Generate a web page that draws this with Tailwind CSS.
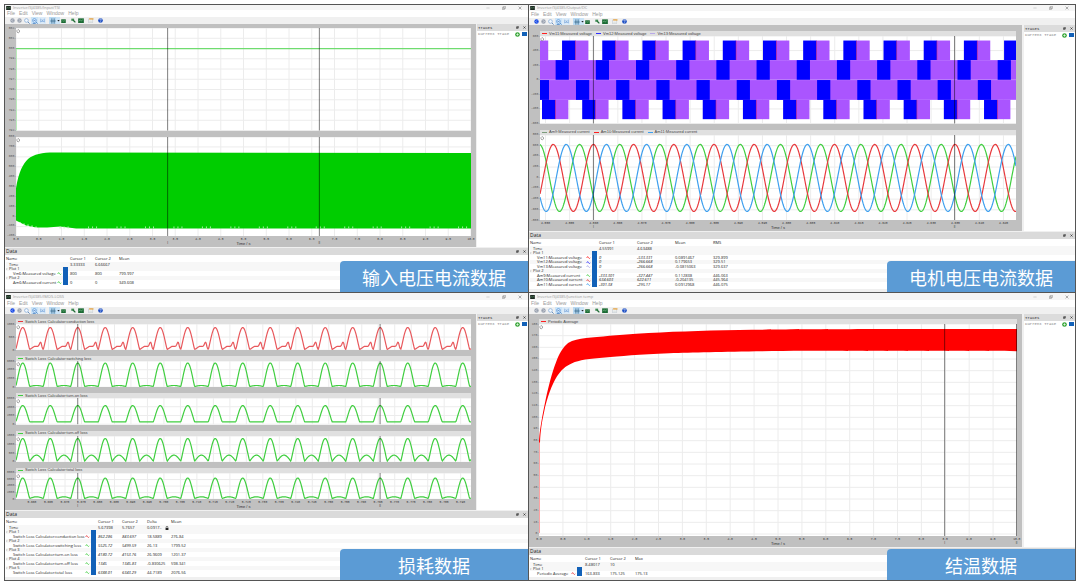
<!DOCTYPE html>
<html lang="zh-CN">
<head>
  <meta charset="UTF-8">
  <meta name="viewport" content="width=device-width, initial-scale=1.0">
  <title>Inverter scopes</title>
  <script src="https://cdn.jsdelivr.net/npm/@tailwindcss/browser@4"></script>
</head>
<body class="bg-white font-['Open_Sans','Noto_Sans_CJK_SC',sans-serif] text-[4px] leading-none">
  <!-- shared icons -->
  <svg class="hidden">
    <symbol id="i-app" viewBox="0 0 14 12"><rect width="14" height="12" fill="#1d2b22"/><path d="M2 8l3-4 3 3 4-4" fill="none" stroke="#6fae7d" stroke-width="1.5"/></symbol>
    <symbol id="i-back" viewBox="0 0 16 16"><circle cx="8" cy="8" r="7" fill="currentColor"/><path d="M9.500 4.500L6 8l3.500 3.500" fill="none" stroke="#fff" stroke-width="2"/></symbol>
    <symbol id="i-fwd" viewBox="0 0 16 16"><circle cx="8" cy="8" r="7" fill="currentColor"/><path d="M6.500 4.500L10 8l-3.500 3.500" fill="none" stroke="#fff" stroke-width="2"/></symbol>
    <symbol id="i-zoom" viewBox="0 0 16 16"><circle cx="6.500" cy="6.500" r="5" fill="#f2f8ff" stroke="#7fa9d6" stroke-width="1.800"/><path d="M10.500 10.500l4.500 4.500" stroke="#5b86b8" stroke-width="2.400"/></symbol>
    <symbol id="i-zoomx" viewBox="0 0 16 16"><circle cx="6.500" cy="6.500" r="5" fill="#e3f1ff" stroke="#4f8fd6" stroke-width="1.800"/><path d="M4 6.500h5M10.500 10.500L15 15M2 14.500h8" stroke="#3f79bd" stroke-width="2"/></symbol>
    <symbol id="i-fit" viewBox="0 0 16 16"><path d="M2 2v12M14 2v12M2 11h12M5 5l6 5M11 5l-6 5" fill="none" stroke="#6f9fd8" stroke-width="1.800"/></symbol>
    <symbol id="i-cursor" viewBox="0 0 16 16"><path d="M5 1v14M11 1v14M1 8h14" fill="none" stroke="#2e6083" stroke-width="2"/></symbol>
    <symbol id="i-scope" viewBox="0 0 16 14"><rect width="16" height="13" y="1" fill="#1c6b35"/><path d="M2 9l4-4 3 4 4-5" fill="none" stroke="#8fd19b" stroke-width="1.500"/></symbol>
    <symbol id="i-pick" viewBox="0 0 16 16"><rect x="1" y="2" width="9" height="7" fill="#3d8a52"/><path d="M7 7l7 7" stroke="#1e6a33" stroke-width="4"/></symbol>
    <symbol id="i-win" viewBox="0 0 18 16"><path d="M1 3h13v12H1z" fill="#fff" stroke="#8b98a8"/><path d="M3 1h14v4H3z" fill="#e8a23a"/><path d="M3 9h9M3 12h9" stroke="#9aa"/></symbol>
    <symbol id="i-help" viewBox="0 0 16 16"><circle cx="8" cy="8" r="7.500" fill="#1d4fc4"/><path d="M5.500 6a2.500 2.500 0 1 1 3.500 2.300c-.8.4-1 .8-1 1.700M8 11.500v2" fill="none" stroke="#fff" stroke-width="1.800"/></symbol>
    <symbol id="i-float" viewBox="0 0 10 10"><path d="M3 1h6v5H3zM1 4h5v5H1z" fill="none" stroke="currentColor" stroke-width="1.600"/></symbol>
    <symbol id="i-close" viewBox="0 0 10 10"><path d="M1.500 1.500l7 7M8.500 1.500l-7 7" stroke="currentColor" stroke-width="2"/></symbol>
    <symbol id="i-min" viewBox="0 0 10 10"><path d="M1 5h8" stroke="currentColor" stroke-width="1"/></symbol>
    <symbol id="i-add" viewBox="0 0 16 16"><circle cx="8" cy="8" r="7.500" fill="#35a535"/><path d="M8 4v8M4 8h8" stroke="#fff" stroke-width="2"/></symbol>
    <symbol id="i-wave" viewBox="0 0 16 12"><path d="M1 8C3 1 6 1 8 6s5 5 7 1" fill="none" stroke="currentColor" stroke-width="3"/></symbol>
    <symbol id="i-lock" viewBox="0 0 12 14"><path d="M3 7V4a3 3 0 0 1 6 0v3" fill="none" stroke="#222" stroke-width="2"/><rect x="1" y="7" width="10" height="7" fill="#222"/></symbol>
    <symbol id="i-down" viewBox="0 0 10 10"><path d="M1 3h8L5 8z" fill="currentColor"/></symbol>
    <symbol id="i-chev" viewBox="0 0 10 10"><path d="M1 3l4 4 4-4" fill="none" stroke="#444" stroke-width="1.500"/></symbol>
  </svg>

  <main id="board" class="grid h-screen grid-cols-[524fr_548fr] grid-rows-[288fr_289fr] p-1"></main>

  <script>
    const GREEN = '#3fce3f', RED = '#e8383c', BLUE = '#3d9fee';
    const icon = (id, cls) => `<svg class="${cls}"><use href="#i-${id}"/></svg>`;
    const range = (from, step, count, digits = 0) =>
      Array.from({ length: count }, (_, i) => (from + i * step).toFixed(digits));

    // sample a function into an svg path
    function curve(w, fn, step = 0.5) {
      let d = '';
      for (let x = 0; x <= w; x += step) d += `${d ? 'L' : 'M'}${x.toFixed(1)} ${fn(x).toFixed(2)}`;
      return d;
    }
    const line = (d, color) => `<path d="${d}" fill="none" stroke="${color}" stroke-width="1.200" vector-effect="non-scaling-stroke"/>`;

    // ---- input voltage / current ----
    const voltage = line('M0 20.500H454', '#6fdc6f') + line('M0.300 102V21', '#b4eab4');
    let notches = '';
    for (let x = 44; x < 450; x += 28.4) {
      notches += [0, 4, 8].map(o => `M${x + o} 89v2`).join('');
    }
    const current = `
      <path d="M0 51C3 34 7 27 12 22C18 17 26 15.500 38 15.500L454 16V91H60L44 89L31 90L20 90L10 88L4 85L0 83Z" fill="#00cd00"/>
      <path d="M4 84.500v3M8 86v3M12 87v3M16 88v3M20 89v2" stroke="#fff" stroke-width="0.800"/>
      <path d="${notches}" stroke="#b5f0b5" stroke-width="0.900"/>`;

    // ---- motor voltage: four levels, each repeating every 40.1 ----
    const levels = [
      { y: 4.5, h: 19.5, blue: 22, full: false },
      { y: 24, h: 19.5, blue: 15.6, full: true },
      { y: 43.8, h: 19.7, blue: -4.2, full: true },
      { y: 63.5, h: 19.2, blue: 2, full: false },
    ];
    let motorV = '';
    for (const l of levels) {
      if (l.full) motorV += `<rect x="0" y="${l.y}" width="475" height="${l.h}" fill="#aa55ff"/>`;
      for (let i = -1; i < 13; i++) {
        const x = l.blue + i * 40.1;
        if (!l.full) motorV += `<rect x="${x + 13}" y="${l.y}" width="13.300" height="${l.h}" fill="#aa55ff"/>`;
        motorV += `<rect x="${x}" y="${l.y}" width="13.200" height="${l.h}" fill="#0000ff"/>`;
        if (!l.full) motorV += `<rect x="${x + 13}" y="${l.y}" width="0.500" height="${l.h}" fill="#d0206a"/>`;
      }
    }
    const sine = (peak, color) => line(curve(475, x => 42.7 - 33.3 * Math.cos((x - peak) / 40.1 * 2 * Math.PI)), color);
    const motorI = sine(39.5, GREEN) + sine(53.3, RED) + sine(66.3, BLUE);

    // ---- switch losses: a main lobe, then a small tail between lobes ----
    function lobes(peakY, baseY, tail) {
      return curve(454, x => {
        const d = (((x - 6.7 + 7) % 27.44) + 27.44) % 27.44 - 7;
        if (d < 7) return baseY - (baseY - peakY) * Math.pow(Math.cos(d / 14 * Math.PI), 1.2);
        return baseY - tail((d - 7) / 13.44);
      });
    }
    const hump = h => t => h * Math.sin(Math.PI * t);
    const conductionTail = t => 3 * Math.min(1, t * 3) * (1 - Math.max(0, t - 0.85) / 0.15)
      + 4.2 * Math.exp(-Math.pow((t - 0.8) / 0.11, 2)) * (1 - Math.max(0, t - 0.85) / 0.15);

    // ---- junction temperature ----
    const junction = `
      <path d="M0.500 114V208" stroke="#ff9a9a" stroke-width="0.900"/>
      <path d="M0 116C1 103 4 88 6.500 76C9 64 13 48 17 38C20 30 24 23 29 19C34 16 40 15 47 14C60 12.600 80 11 97 9.700C130 7.600 160 6.600 200 5.900C260 5.300 300 5.100 477 5.100V27C400 27 300 27 266 26.700C200 27 160 28.200 130 29C100 30 80 32 66 33.400C50 34.500 40 36 33 39C26 42 22 46 18 52C13 60 8 73 5 88C3 97 1.500 106 1 118H0Z" fill="#ff0000"/>`;

    const windows = [
      {
        title: 'Inverter/SJ4385/Input/TSI', caption: '输入电压电流数据', titleCls: 'h-[5px]', backCls: 'text-gray-400',
        frame: 'border-l border-t', areaCls: 'pt-1 pr-[5px]', axisCls: 'w-[11px]', tracesCls: 'ml-px', dataPad: 'pb-1',
        w: 454, grid: [0, 22.7, 21], cursors: [151.3, 302.7], ticks: range(0, 0.5, 21, 1), tickPad: [0, 0],
        plots: [
          { h: 102, ys: range(802, -1, 11), body: voltage },
          { h: 99, ys: range(800, -100, 11), body: current },
        ],
        cols: [57, 7, 25, 24, 50], head: ['Cursor 1', 'Cursor 2', 'Mean'], time: ['3.33333', '6.66667'],
        rows: [['Plot 1'], ['Vm6:Measured voltage', GREEN, '800', '800', '799.997'],
          ['Plot 2'], ['Am6:Measured current', GREEN, '0', '0', '349.608']],
      },
      {
        title: 'Inverter/SJ4385/Output/DC', caption: '电机电压电流数据', titleCls: 'h-[6px]', backCls: 'text-blue-700',
        frame: 'border-l border-t border-r', areaCls: 'pt-[6px] pr-[6px]', axisCls: 'w-[11px]', tracesCls: 'ml-0.5', dataPad: 'pb-0.5',
        w: 475, grid: [5.5, 24.05, 20], cursors: [53.3, 413.7], ticks: range(4.55, 0.005, 20, 3), tickPad: [1.16, 2.6],
        plots: [
          { h: 87, ys: range(600, -200, 7), body: motorV, legend: [['Vm11:Measured voltage', '#ff2020'], ['Vm12:Measured voltage', '#3030ff'], ['Vm13:Measured voltage', '#b9a9e8']] },
          { h: 85, ys: range(800, -200, 9), body: motorI, legend: [['Am9:Measured current', '#7c9c7c'], ['Am10:Measured current', '#ff2020'], ['Am11:Measured current', BLUE]] },
        ],
        cols: [62, 7, 38, 38, 38, 50], head: ['Cursor 1', 'Cursor 2', 'Mean', 'RMS'], time: ['4.55991', '4.63488'], slanted: true,
        rows: [['Plot 1'],
          ['Vm11:Measured voltage', '#ff2020', '0', '-533.331', '0.0891467', '329.899'],
          ['Vm12:Measured voltage', '#3030ff', '0', '-266.668', '0.179653', '329.51'],
          ['Vm13:Measured voltage', '#a9a9e8', '0', '-266.668', '-0.0815063', '329.637'],
          ['Plot 2'],
          ['Am9:Measured current', GREEN, '-333.301', '-327.447', '0.112838', '446.063'],
          ['Am10:Measured current', RED, '634.603', '622.611', '-0.204135', '445.964'],
          ['Am11:Measured current', BLUE, '-301.38', '-295.17', '0.0912968', '446.075']],
      },
      {
        title: 'Inverter/SJ4385/IMOS-LOSS', caption: '损耗数据', titleCls: 'h-[7px]', backCls: 'text-blue-700',
        frame: 'border-l border-t border-b', areaCls: 'pt-[5px] pr-[5px]', axisCls: 'w-[11px]', tracesCls: 'ml-px', dataPad: 'pb-0.5',
        w: 454, grid: [16, 16.45, 27], cursors: [61.6, 363.3], ticks: range(5.66, 0.005, 27, 3), tickPad: [3.5, 2.3],
        plots: [
          { h: 26, ys: ['1000', '500', '0'], legend: [['Switch Loss Calculator:conduction loss', RED]], body: line(lobes(3.5, 25.3, conductionTail), '#e8585c') },
          { h: 26, ys: range(6000, -2000, 4), legend: [['Switch Loss Calculator:switching loss', GREEN]], body: line(lobes(2, 25.3, hump(1)), GREEN) },
          { h: 26, ys: range(6000, -2000, 4), legend: [['Switch Loss Calculator:turn-on loss', GREEN]], body: line(lobes(7.5, 23.7, hump(0)), GREEN) },
          { h: 26, ys: range(1500, -500, 4), legend: [['Switch Loss Calculator:turn-off loss', GREEN]], body: line(lobes(2.5, 25, hump(6)), GREEN) },
          { h: 26, ys: range(8000, -2000, 5), legend: [['Switch Loss Calculator:total loss', GREEN]], body: line(lobes(5, 25.3, hump(1.7)), GREEN) },
        ],
        cols: [85, 7, 24, 25, 24, 50], head: ['Cursor 1', 'Cursor 2', 'Delta', 'Mean'], time: ['5.67398', '5.7657', '0.0917..'], locked: true, slanted: true,
        rows: [['Plot 1'], ['Switch Loss Calculator:conduction loss', RED, '862.286', '843.697', '18.5889', '276.84'],
          ['Plot 2'], ['Switch Loss Calculator:switching loss', GREEN, '5525.72', '5499.59', '26.13', '1799.52'],
          ['Plot 3'], ['Switch Loss Calculator:turn-on loss', GREEN, '4180.72', '4153.76', '26.9609', '1201.37'],
          ['Plot 4'], ['Switch Loss Calculator:turn-off loss', GREEN, '1345', '1345.83', '-0.830625', '598.341'],
          ['Plot 5'], ['Switch Loss Calculator:total loss', GREEN, '6388.01', '6343.29', '44.7189', '2076.56']],
      },
      {
        title: 'Inverter/SJ4385/Junction temp', caption: '结温数据', titleCls: 'h-[7px]', backCls: 'text-gray-400',
        frame: 'border', areaCls: 'pt-[5px] pr-[5px]', axisCls: 'w-[10px] pb-0.5', tracesCls: 'ml-0.5', dataPad: 'pb-px',
        w: 477, grid: [0, 23.85, 21], cursors: [404.8, 476.5], ticks: range(0, 0.5, 21, 1), tickPad: [0, 0],
        plots: [{ h: 211, ys: range(180, -10, 19), gridEnd: 209, legend: [['Periodic Average', '#ff2020']], body: junction }],
        cols: [47, 8, 25, 25, 50], head: ['Cursor 1', 'Cursor 2', 'Max'], time: ['8.48017', '10'],
        rows: [['Plot 1'], ['Periodic Average', RED, '163.833', '175.125', '175.13']],
      },
    ];

    function plotHtml(win, p) {
      const [x0, dx, n] = win.grid;
      const rowsEnd = p.gridEnd || p.h;
      let grid = '';
      for (let i = 0; i < n; i++) grid += `M${x0 + i * dx} 0V${p.h}`;
      p.ys.forEach((_, i) => { const y = i * rowsEnd / (p.ys.length - 1); grid += `M0 ${y}H${win.w}`; });
      const cursors = win.cursors.map(x => `M${x} 0V${p.h}`).join('');
      const legend = p.legend ? `
        <div class="flex">
          <div class="${win.axisCls} h-[5px] shrink-0"></div>
          <div class="flex h-[5px] flex-1 items-center gap-1 bg-[#e0e0e0] pl-0.5 font-['Liberation_Sans',sans-serif] text-[#444]">
            ${p.legend.map(([t, c]) => `<span class="flex items-center gap-0.5 whitespace-nowrap"><i class="h-px w-[5px]" style="background:${c}"></i>${t}</span>`).join('')}
          </div>
        </div>` : '';
      return `
        <div class="flex min-h-0 flex-col" style="flex:${p.h + (p.legend ? 5 : 0)} 1 0">
          ${legend}
          <div class="flex min-h-0 flex-1">
            <div class="${win.axisCls} flex shrink-0 flex-col justify-between font-['Liberation_Mono',monospace] text-[3px] text-[#555]">
              ${p.ys.map(y => `<span class="flex h-0 items-center justify-end">${y}-</span>`).join('')}
            </div>
            <svg class="h-full min-w-0 flex-1 bg-white" viewBox="0 0 ${win.w} ${p.h}" preserveAspectRatio="none">
              <path d="${grid}" stroke="#ececec" stroke-width="1" vector-effect="non-scaling-stroke"/>
              ${p.body}
              <path d="${cursors}" stroke="#000" stroke-opacity="0.5" stroke-width="1" vector-effect="non-scaling-stroke"/>
              <path d="M2 1.500L3.500 2.500V4L2 5L1 4V2.500Z" fill="#fff" stroke="#555" stroke-width="0.500"/>
            </svg>
          </div>
        </div>`;
    }

    // rows alternate between 4px and 5px
    function rowHtml(win, r, i) {
      const span = i % 2 ? '<tr class="h-[5px]">' : '<tr class="h-[4px] bg-[#f7f7f7]">';
      const boxCls = i % 2 ? 'h-[5px]' : 'h-[4px]';
      const box = `<td class="p-0"><input type="checkbox" checked aria-label="${r[0]}" class="block w-[5px] appearance-none bg-[#1261b8] ${boxCls}"></td>`;
      if (r.length === 1) {
        return `${span}<td class="p-0"><span class="flex h-[4px] items-center gap-px">${icon('chev', 'size-[2px]')}${r[0]}</span></td>${box}<td class="p-0" colspan="${win.head.length}"></td></tr>`;
      }
      const [name, color, ...vals] = r;
      return `${span}<td class="p-0"><span class="flex h-[4px] items-center justify-between whitespace-nowrap pr-px pl-[7px]">${name}<i class="flex" style="color:${color}">${icon('wave', 'h-[3px] w-[5px]')}</i></span></td>${box}
        ${vals.map((v, k) => `<td class="p-0 ${win.slanted && k < 2 ? 'italic' : ''}"><span class="flex h-[4px] items-center">${v}</span></td>`).join('')}</tr>`;
    }

    function windowHtml(win) {
      const btn = (id, label, size, cls = '') => `<button class="flex h-[7px] items-center justify-center ${cls}" aria-label="${label}">${icon(id, size)}</button>`;
      return `
      <section class="relative flex min-h-0 min-w-0 flex-col border-[#555] bg-[#f0f0f0] ${win.frame}">
        <header class="${win.titleCls} flex shrink-0 items-center bg-[#f5f5f5] pl-px text-[#999]">
          ${icon('app', 'h-[4px] w-[5px]')}
          <h2 class="ml-0.5 flex-1">${win.title}</h2>
          <div class="flex gap-3 pr-[6px]">
            ${icon('min', 'size-[4px]')}${icon('float', 'size-[4px]')}${icon('close', 'size-[4px]')}
          </div>
        </header>
        <nav class="flex h-[7px] shrink-0 items-center gap-1 bg-white pl-0.5 font-['Liberation_Sans',sans-serif] text-[5px] text-[#999]">
          <button>File</button><button>Edit</button><button>View</button><button>Window</button><button>Help</button>
        </nav>
        <div class="flex h-[7px] shrink-0 items-center bg-[#f0f0f0] pl-1">
          ${btn('back', 'Back', 'size-[5px]', 'w-[7px] ' + win.backCls)}
          ${btn('fwd', 'Forward', 'size-[5px]', 'w-[7px] text-gray-400')}
          ${btn('zoom', 'Zoom', 'size-[6px]', 'w-[8px]')}
          ${btn('zoomx', 'Zoom x', 'size-[6px]', 'w-[7px] bg-[#cce4f7]')}
          ${btn('fit', 'Fit', 'size-[5px]', 'w-[8px] bg-[#dcebf8]')}
          ${btn('cursor', 'Cursors', 'size-[6px]', 'ml-[3px] w-[7px] bg-[#b9d9f2]')}
          ${btn('down', 'Cursor menu', 'size-[3px]', 'w-1 bg-[#cce4f7] text-[#222]')}
          ${btn('scope', 'Scope', 'h-[4px] w-[5px]', 'w-[7px]')}
          ${btn('pick', 'Hold trace', 'size-[5px]', 'ml-[3px] w-[7px]')}
          ${btn('scope', 'Save trace', 'h-[5px] w-[6px]', 'w-[7px]')}
          ${btn('win', 'Properties', 'h-[5px] w-[6px]', 'ml-[3px] w-[7px]')}
          ${btn('help', 'Help', 'size-[5px]', 'ml-[3px] w-[7px]')}
        </div>
        <div class="flex min-h-0 flex-1">
          <div class="flex min-w-0 flex-1 flex-col bg-[#c0c0c0] ${win.areaCls}">
            <div class="flex min-h-0 flex-1 flex-col gap-[6px]">
              ${win.plots.map(p => plotHtml(win, p)).join('')}
            </div>
            <div class="flex h-[11px] shrink-0 font-['Liberation_Mono',monospace] text-[3px] text-[#333]">
              <div class="${win.axisCls} shrink-0"></div>
              <div class="min-w-0 flex-1">
                <div class="flex h-[6px] items-center justify-between" style="margin-left:${win.tickPad[0]}%;margin-right:${win.tickPad[1]}%">
                  ${win.ticks.map(t => `<span class="flex w-0 justify-center">${t}</span>`).join('')}
                </div>
                <div class="relative h-[4px] text-center font-['Liberation_Sans',sans-serif] text-[4px]">Time / s
                  ${win.cursors.map((x, i) => `<span class="absolute top-0 -translate-x-1/2 text-[3px]" style="left:${x / win.w * 100}%">${i ? 'II' : 'I'}</span>`).join('')}
                </div>
              </div>
            </div>
          </div>
          <aside class="${win.tracesCls} w-[51px] shrink-0 bg-white font-['Liberation_Mono',monospace] text-[#444]">
            <div class="flex h-[7px] items-center bg-[#dcdcdc] pr-0.5 pl-px text-[#222]">
              <h3 class="flex-1">Traces</h3>${icon('float', 'mr-1 size-[3px]')}${icon('close', 'size-[3px]')}
            </div>
            <div class="flex h-[6px] items-center pr-px pl-px text-[#777]">
              <span class="flex-1 whitespace-nowrap">Current Trace</span>${icon('add', 'mr-0.5 size-[5px]')}
              <input type="checkbox" checked aria-label="Current Trace" class="block h-[4px] w-[5px] appearance-none bg-[#1261b8]">
            </div>
          </aside>
        </div>
        <div class="mt-px flex h-[7px] shrink-0 items-center bg-[#dadada] pr-0.5 pl-px text-[5px] text-[#222]">
          <h3 class="flex-1">Data</h3>${icon('float', 'mr-1 size-[3px]')}${icon('close', 'size-[3px]')}
        </div>
        <div class="shrink-0 bg-white pl-px text-[#222] ${win.dataPad}">
          <table class="w-full table-fixed border-collapse text-left">
            <colgroup>${win.cols.slice(0, -1).map(c => `<col style="width:${c}px">`).join('')}<col></colgroup>
            <thead>
              <tr class="h-[7px]"><th class="p-0 font-normal">Name</th><th class="p-0"></th>${win.head.map(h => `<th class="p-0 font-normal">${h}</th>`).join('')}</tr>
            </thead>
            <tbody>
              <tr class="h-[5px] bg-[#f7f7f7]"><td class="p-0 pl-[3px]">Time</td><td class="p-0"></td>
                ${win.head.map((_, k) => `<td class="p-0"><span class="flex h-[4px] items-center">${win.time[k] || ''}${win.locked && k === 2 ? icon('lock', 'ml-[3px] h-[4px] w-[4px]') : ''}</span></td>`).join('')}
              </tr>
            </tbody>
            <tbody>${win.rows.map((r, i) => rowHtml(win, r, i)).join('')}</tbody>
          </table>
        </div>
        <footer class="h-[3px] shrink-0 bg-[#f0f0f0]"></footer>
        <!-- caption over the lower right corner -->
        <div class="absolute right-0 bottom-0 flex h-[31px] w-[188px] items-center justify-center rounded-tl-[4px] bg-[#5b9bd5] font-['Noto_Sans_CJK_SC',sans-serif] text-[18px] text-white">${win.caption}</div>
      </section>`;
    }

    document.getElementById('board').innerHTML = windows.map(windowHtml).join('');
  </script>
</body>
</html>
